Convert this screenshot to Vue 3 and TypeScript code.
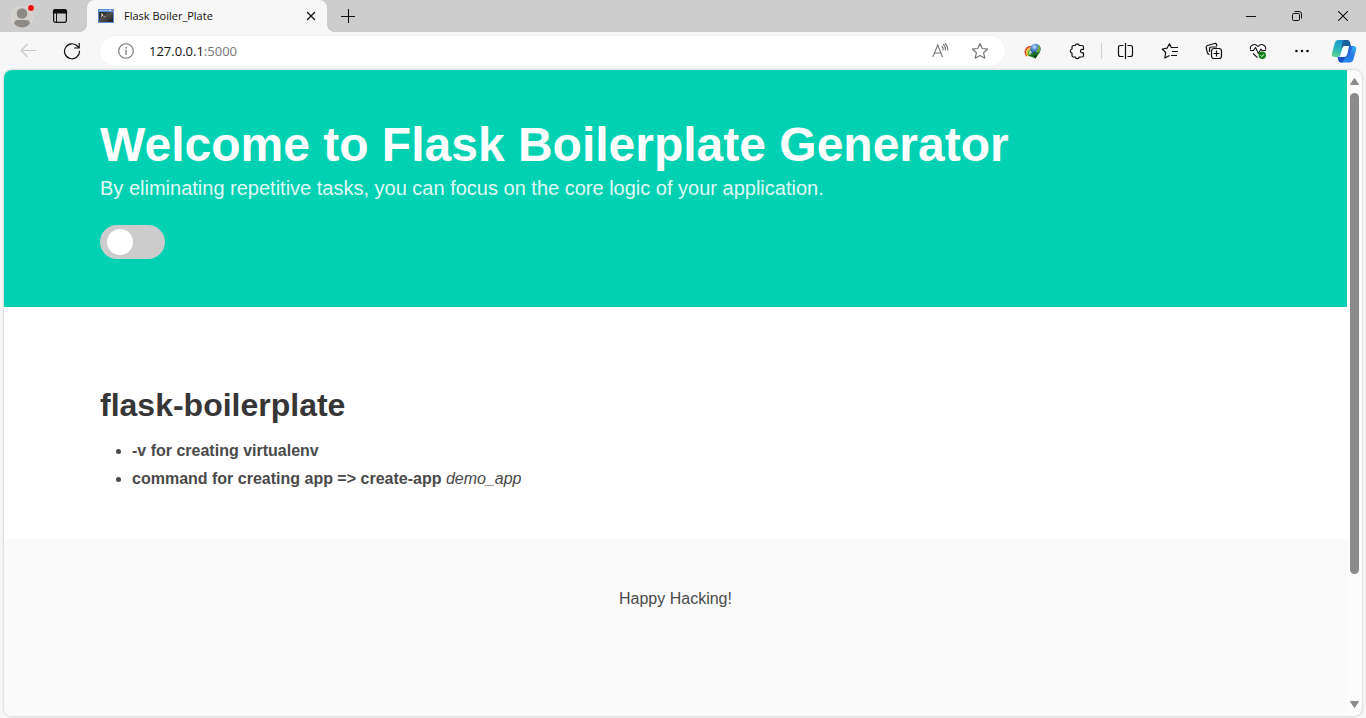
<script setup lang="ts">
import { ref } from 'vue'

const enabled = ref(false)
const host = '127.0.0.1'
const port = ':5000'
</script>

<template>
  <div class="browser">
    <header class="tabbar">
      <button class="profile" aria-label="Profile">
        <svg width="26" height="26" viewBox="0 0 26 26">
          <circle cx="12" cy="14" r="10.5" fill="#d3d0cc" stroke="#dedad4" />
          <circle cx="12" cy="10.500" r="5.300" fill="#8d8a86" />
          <path d="M4 20.500C4 18 6 17 8 17h8c2 0 4 1 4 3.500C18 23 15 24.500 12 24.500S6 23 4 20.500Z" fill="#8d8a86" />
          <circle cx="21" cy="5" r="3.600" fill="#e81010" stroke="#e4e4e4" stroke-width="1" />
        </svg>
      </button>
      <button class="tabmenu" aria-label="Tab actions">
        <svg width="16" height="16" viewBox="0 0 16 16" fill="none" stroke="#111" stroke-width="1.200">
          <rect x="1.600" y="1.600" width="12.800" height="12.800" rx="2.200" />
          <path d="M1.500 5V3.500q0-2 2-2h9q2 0 2 2V5Z" fill="#111" />
          <path d="M4.500 5v9" stroke-width="1" />
        </svg>
      </button>
      <div class="tab">
        <svg class="favicon" width="16" height="16" viewBox="0 0 16 16">
          <defs>
            <linearGradient id="console" x1="0" y1="0" x2="1" y2="1">
              <stop offset="0" stop-color="#222" /><stop offset="0.500" stop-color="#505050" /><stop offset="1" stop-color="#191919" />
            </linearGradient>
          </defs>
          <rect y="1" width="16" height="14" fill="#5b8fd9" />
          <path d="M1 2.500h9" stroke="#8fb9ec" />
          <path d="M11 2.500h2" stroke="#e8f1fc" />
          <path d="M13.500 2.500h1.500" stroke="#d86b55" />
          <rect x="1" y="4" width="14" height="10" fill="url(#console)" />
          <path d="m3 5.500 2 1.500-2 1.500" stroke="#fff" fill="none" /><path d="M5.500 8.500h2" stroke="#999" />
        </svg>
        <span class="tab-title">Flask Boiler_Plate</span>
        <button class="tab-close" aria-label="Close tab">
          <svg width="10" height="10" viewBox="0 0 10 10" stroke="#111" stroke-width="1.200"><path d="m1 1 8 8M9 1 1 9" /></svg>
        </button>
      </div>
      <button class="newtab" aria-label="New tab">
        <svg width="14" height="14" viewBox="0 0 14 14" stroke="#111" stroke-width="1.100"><path d="M7.500 0v14M0 7.500h14" /></svg>
      </button>
      <div class="window-controls">
        <button aria-label="Minimize">
          <svg width="10" height="10" viewBox="0 0 10 10" stroke="#111"><path d="M0 5.500h10" /></svg>
        </button>
        <button aria-label="Restore">
          <svg width="10" height="10" viewBox="0 0 10 10" fill="none" stroke="#111"><rect x="0.500" y="2.500" width="7" height="7" rx="1.200" /><path d="M2.500.500h4.500q2.500 0 2.500 2.500V7.500" /></svg>
        </button>
        <button aria-label="Close">
          <svg width="10" height="10" viewBox="0 0 10 10" stroke="#111" stroke-width="1.100"><path d="m0 0 10 10M10 0 0 10" /></svg>
        </button>
      </div>
    </header>

    <nav class="toolbar">
      <button class="tool" aria-label="Back" disabled>
        <svg width="16" height="16" viewBox="0 0 16 16" fill="none" stroke="#c6c6c6" stroke-width="1.100"><path d="M16 7.500H1M7.500 1 1 7.500 7.500 14" /></svg>
      </button>
      <button class="tool" aria-label="Refresh">
        <svg width="18" height="18" viewBox="0 0 18 18" fill="none" stroke="#111" stroke-width="1.200"><path d="M16.500 8.800A7.500 7.500 0 1 1 14.800 4.500L16 5.800M16.200 1v5h-5" /></svg>
      </button>
      <form class="omnibox" @submit.prevent>
        <button type="button" class="site-info" aria-label="View site information">
          <svg width="16" height="16" viewBox="0 0 16 16" fill="none" stroke="#777" stroke-width="1.100"><circle cx="8" cy="8" r="7.300" /><path d="M8 6.800V12M8 4v1.500" stroke-width="1.300" /></svg>
        </button>
        <div class="address"><span>{{ host }}</span><span class="port">{{ port }}</span></div>
        <button type="button" class="omni-action" aria-label="Read aloud">
          <svg width="18" height="18" viewBox="0 0 18 18" fill="none" stroke="#757575" stroke-width="1.100" stroke-linecap="round"><path d="M2 14.500 6.700 3l4.700 11.500M3.500 11h6.500M11 4.500q1.500 1.500 1.200 3.500M12.500 2.500q2.300 2 2 5.500M14 1.500q3 2.500 2.700 6.500" /></svg>
        </button>
        <button type="button" class="omni-action" aria-label="Add to favorites">
          <svg width="18" height="18" viewBox="0 0 18 18" fill="none" stroke="#757575" stroke-width="1.200" stroke-linejoin="round"><path d="m9 1.500 2.200 5 5.400.600-4 3.700 1.200 5.400L9 13.500l-4.800 2.700 1.200-5.400-4-3.700 5.400-.600Z" /></svg>
        </button>
      </form>
      <button class="tool" aria-label="Download extension">
        <svg width="18" height="18" viewBox="0 0 18 18">
          <defs>
            <radialGradient id="globe" cx="0.400" cy="0.300" r="0.700">
              <stop offset="0" stop-color="#c9e2fa" /><stop offset="0.450" stop-color="#4a86d0" /><stop offset="1" stop-color="#1d3f78" />
            </radialGradient>
          </defs>
          <path d="M3 14C-.300 10 1.500 5 7 4.500" fill="none" stroke="#d9462b" stroke-width="1.600" />
          <path d="M4.300 14C1.500 10 3 6.500 7.500 6" fill="none" stroke="#f0c52c" stroke-width="1.600" />
          <path d="M6 14C3 11 4.500 8 8 7.500" fill="none" stroke="#53ac2d" stroke-width="1.600" />
          <circle cx="11.500" cy="7" r="5.200" fill="url(#globe)" />
          <path d="M14 3q3 2 2.500 5.500L14 11l-2-1.500 2-2.500Z" fill="#6cae33" />
          <path d="M5.500 10 8 11.500q1.500-.500 2-2l1.500 1.500 4.500-1-4.500 6.500L4 13.500l3-1Z" fill="#17701a" />
          <path d="m9 13.500 2.500 3 1.500-3Z" fill="#063c09" />
        </svg>
      </button>
      <button class="tool" aria-label="Extensions">
        <svg width="18" height="18" viewBox="0 0 18 18" fill="none" stroke="#111" stroke-width="1.200" stroke-linejoin="round"><path d="M5.500 3.500H7.200a2.100 2.100 0 0 1 4.100 0H14q1.500 0 1.500 1.500v2.300h-1.200a1.800 1.800 0 0 0 0 3.600h1.200V13.500q0 1.500-1.500 1.500h-2.700a2.100 2.100 0 0 1-4.100 0H5.500q-1.500 0-1.500-1.500v-2.400a2.100 2.100 0 0 1 0-4.100V5q0-1.500 1.500-1.500Z" /></svg>
      </button>
      <span class="divider"></span>
      <button class="tool" aria-label="Split screen">
        <svg width="18" height="18" viewBox="0 0 18 18" fill="none" stroke="#111" stroke-width="1.200"><path d="M6.500 3.500H3.500q-2 0-2 2v7q0 2 2 2h3M8.500 1v16M10.500 3.500h3q2 0 2 2v7q0 2-2 2h-3" /></svg>
      </button>
      <button class="tool" aria-label="Favorites">
        <svg width="18" height="18" viewBox="0 0 18 18" fill="none" stroke="#111" stroke-width="1.200" stroke-linejoin="round"><path d="M10.500 6 8.500 1.800 6 6.200 1.200 7l3.500 3.500-.900 5.500L8.500 13.500M10 5.500h7M11 9.500h6M10 13.500h6" /></svg>
      </button>
      <button class="tool" aria-label="Collections">
        <svg width="18" height="18" viewBox="0 0 18 18" fill="none" stroke="#111" stroke-width="1.200" stroke-linejoin="round"><path d="M4.500 12.500Q2.800 12.300 2.300 10.500L1.200 5.500Q1 4 2.500 3.500l7-2q1.500-.400 2 1l.500 1.500M4.500 10V7q0-2 2-2H12" /><rect x="6.500" y="6.500" width="10" height="10" rx="2.500" /><path d="M11.500 8.500v6M8.500 11.500h6" /></svg>
      </button>
      <button class="tool" aria-label="Browser essentials">
        <svg width="18" height="18" viewBox="0 0 18 18" fill="none" stroke="#111" stroke-width="1.100" stroke-linejoin="round"><path d="M1.500 7.500C.500 3.500 5.500.500 9 4.500 12.500.500 17.500 3.500 16.500 7.500M1 8.500h3.500L6.500 5.500l3 6L12 7l1 1.500h4M4 11.500l4.500 4.200" /><circle cx="13.300" cy="13.300" r="3.700" fill="#15801b" stroke="none" /><path d="m11.600 13.400 1.200 1.200 2.300-2.400" stroke="#fff" stroke-width="1" /></svg>
      </button>
      <button class="tool" aria-label="Settings and more">
        <svg width="18" height="18" viewBox="0 0 18 18" fill="#111"><circle cx="3.500" cy="9" r="1.300" /><circle cx="9" cy="9" r="1.300" /><circle cx="14.500" cy="9" r="1.300" /></svg>
      </button>
      <button class="tool copilot" aria-label="Copilot">
        <svg width="26" height="24" viewBox="0 0 26 24">
          <defs>
            <linearGradient id="cpLeft" x1="0.600" y1="0" x2="0.300" y2="1">
              <stop offset="0" stop-color="#1994d0" /><stop offset="0.550" stop-color="#2ab5bb" /><stop offset="1" stop-color="#5fd48f" />
            </linearGradient>
            <linearGradient id="cpRight" x1="0.800" y1="0" x2="0.300" y2="1">
              <stop offset="0" stop-color="#36b4f2" /><stop offset="0.450" stop-color="#2a76e8" /><stop offset="1" stop-color="#1f8cf2" />
            </linearGradient>
          </defs>
          <path d="M7.500 1H16L12 7.500 9.500 15.500Q8.700 18 6.500 18H3.500Q.300 18 1 14L3.800 4Q4.700 1 7.500 1Z" fill="url(#cpLeft)" />
          <path d="M13 1h3.500q2 0 2.500 2l1 4h-6q-2.500 0-3.500 3l.500-5Q11.500 1 13 1Z" fill="#17609c" />
          <path d="M18.500 23.500H10q-2 0-2.500-2L6.500 18q2.300 0 3-2l7-.500L18.500 8q.300-1 2-1h2q3.500 0 2.700 3.500l-2.800 10q-.900 3-3.900 3Z" fill="url(#cpRight)" />
          <path d="M13.500 7h6q-1 .200-1.500 2l-2 7q-.700 2-3 2H7q2 0 2.700-2.500l2-6.500Q12.300 7 13.500 7Z" fill="#f3fbff" />
          <path d="M18 7h4l-4.500 11h-3q1.200-.500 1.700-2Z" fill="#2867dc" />
          <path d="M6.500 18h8l-3 5.500H10q-2 0-2.500-2Z" fill="#1c4fc4" />
        </svg>
      </button>
    </nav>

    <div class="viewport">
      <main class="page">
        <section class="hero">
          <h1>Welcome to Flask Boilerplate Generator</h1>
          <p>By eliminating repetitive tasks, you can focus on the core logic of your application.</p>
          <input v-model="enabled" class="switch" type="checkbox" role="switch" aria-label="Toggle theme" />
        </section>
        <section class="content">
          <h2>flask-boilerplate</h2>
          <ul>
            <li><strong>-v for creating virtualenv</strong></li>
            <li><strong>command for creating app =&gt; create-app</strong> <em>demo_app</em></li>
          </ul>
        </section>
        <footer class="footer"><p>Happy Hacking!</p></footer>
      </main>
      <div class="scrollbar" aria-hidden="true">
        <svg class="arrow" width="9" height="7" viewBox="0 0 9 7"><path d="M4.500.500 8.500 6.500h-8Z" fill="#8b8b8b" stroke="#8b8b8b" stroke-linejoin="round" /></svg>
        <div class="track"><div class="thumb"></div></div>
        <svg class="arrow" width="9" height="7" viewBox="0 0 9 7"><path d="M4.500 6.500.500.500h8Z" fill="#8b8b8b" stroke="#8b8b8b" stroke-linejoin="round" /></svg>
      </div>
    </div>
  </div>
</template>

<style>
body {
  margin: 0;
}
</style>

<style scoped>
* {
  box-sizing: border-box;
}

.browser {
  display: flex;
  flex-direction: column;
  height: 100vh;
  background: #f7f7f7;
  font-family: "Liberation Sans", Arial, sans-serif;
}

button {
  display: flex;
  align-items: center;
  justify-content: center;
  padding: 0;
  border: 0;
  background: transparent;
}

svg {
  flex: none;
  display: block;
}

.tabbar {
  display: flex;
  height: 32px;
  background: #cdcdcd;
}

.profile {
  width: 44px;
  padding-left: 2px;
}

.tabmenu {
  width: 32px;
  margin-right: 11px;
}

.tab {
  position: relative;
  display: flex;
  align-items: center;
  width: 240px;
  padding: 0 11px;
  border-radius: 8px 8px 0 0;
  background: #f7f7f7;
}

.tab::before,
.tab::after {
  content: "";
  position: absolute;
  bottom: 0;
  width: 8px;
  height: 8px;
}

.tab::before {
  right: 100%;
  background: radial-gradient(circle at 0 0, transparent 8px, #f7f7f7 8px);
}

.tab::after {
  left: 100%;
  background: radial-gradient(circle at 100% 0, transparent 8px, #f7f7f7 8px);
}

.tab-title {
  flex: 1;
  margin-left: 10px;
  color: #111;
  font: 11px/16px "Open Sans", "Noto Sans", sans-serif;
}

.tab-close {
  width: 10px;
  height: 16px;
}

.newtab {
  width: 42px;
}

.window-controls {
  display: flex;
  margin-left: auto;
}

.window-controls button {
  width: 46px;
}

.toolbar {
  display: flex;
  align-items: center;
  flex: none;
  height: 38px;
  padding: 0 2px 0 6px;
}

.tool {
  flex: none;
  width: 44px;
  height: 32px;
}

.copilot {
  width: 40px;
}

.omnibox {
  display: flex;
  align-items: center;
  flex: 1;
  height: 30px;
  margin: 0 6px;
  padding: 0 5px 0 8px;
  border-radius: 15px;
  background: #fff;
  box-shadow: 0 0 2px #e8e8e8;
}

.site-info {
  width: 36px;
}

.address {
  flex: 1;
  margin-left: 5px;
  color: #111;
  font: 13px/20px "Open Sans", "Noto Sans", sans-serif;
}

.port {
  color: #767676;
}

.omni-action {
  width: 40px;
  height: 28px;
}

.divider {
  width: 1px;
  height: 16px;
  margin: 0 2px;
  background: #cecece;
}

.viewport {
  display: flex;
  flex: 1;
  min-height: 0;
  margin: 0 4px 2px;
  overflow: hidden;
  border-radius: 8px;
  background: #fcfcfc;
  box-shadow: 0 0 3px #bbb;
}

.page {
  display: flex;
  flex: 1;
  flex-direction: column;
  overflow: hidden;
  background: #fff;
  color: #4a4a4a;
  font-size: 16px;
  line-height: 24px;
}

.hero {
  padding: 48px 96px;
  background: #00d1b2;
  color: #fff;
}

h1,
h2,
p,
ul {
  margin: 0;
}

h1 {
  font-size: 48px;
  line-height: 54px;
}

.hero p {
  margin: 4px 0 24px;
  color: rgba(255, 255, 255, 0.9);
  font-size: 20px;
  line-height: 25px;
}

.switch {
  display: flex;
  align-items: center;
  width: 65px;
  height: 34px;
  margin: 0;
  padding: 0 7px;
  appearance: none;
  border-radius: 17px;
  background: #ccc;
}

.switch::before {
  content: "";
  width: 26px;
  height: 26px;
  border-radius: 50%;
  background: #fff;
}

.switch:checked {
  justify-content: flex-end;
  background: #2196f3;
}

.content {
  padding: 80px 96px 48px;
}

h2 {
  margin-bottom: 16px;
  color: #363636;
  font-size: 32px;
  line-height: 36px;
}

ul {
  padding-left: 32px;
}

li + li {
  margin-top: 4px;
}

.footer {
  flex: 1;
  padding: 48px 24px;
  background: #fafafa;
  text-align: center;
}

.scrollbar {
  display: flex;
  flex-direction: column;
  align-items: center;
  width: 15px;
  padding: 8px 0;
}

.track {
  flex: 1;
  width: 9px;
  margin: 8px 0 7px;
}

.thumb {
  height: 80%;
  border-radius: 5px;
  background: #8b8b8b;
}
</style>
